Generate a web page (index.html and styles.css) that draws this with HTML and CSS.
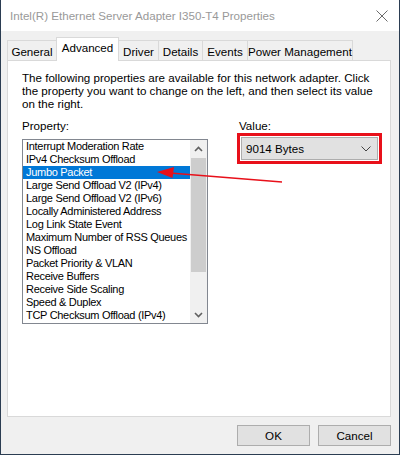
FILE: index.html
```html
<!DOCTYPE html>
<html lang="en">
<head>
    <meta charset="UTF-8">
    <title>Intel(R) Ethernet Server Adapter I350-T4 Properties</title>
    <link rel="stylesheet" href="styles.css">
</head>
<body>
    <div class="window">
        <div class="titlebar">
            <span class="title">Intel(R) Ethernet Server Adapter I350-T4 Properties</span>
            <svg class="close" width="12" height="12" viewBox="0 0 12 12">
                <path d="M0.5 0.5 L11.5 11.5 M11.5 0.5 L0.5 11.5" stroke="#6b6b6b" stroke-width="1" fill="none"/>
            </svg>
        </div>

        <div class="dialog">
            <div class="tabs">
                <div class="tab tab-general">General</div>
                <div class="tab tab-advanced active">Advanced</div>
                <div class="tab tab-driver">Driver</div>
                <div class="tab tab-details">Details</div>
                <div class="tab tab-events">Events</div>
                <div class="tab tab-power">Power Management</div>
            </div>

            <div class="panel">
                <p class="intro">The following properties are available for this network adapter. Click<br>
                the property you want to change on the left, and then select its value<br>
                on the right.</p>

                <div class="columns">
                    <div class="property-col">
                        <div class="label">Property:</div>
                        <div class="listbox">
                            <ul class="items">
                                <li>Interrupt Moderation Rate</li>
                                <li>IPv4 Checksum Offload</li>
                                <li class="selected">Jumbo Packet</li>
                                <li>Large Send Offload V2 (IPv4)</li>
                                <li>Large Send Offload V2 (IPv6)</li>
                                <li>Locally Administered Address</li>
                                <li>Log Link State Event</li>
                                <li>Maximum Number of RSS Queues</li>
                                <li>NS Offload</li>
                                <li>Packet Priority &amp; VLAN</li>
                                <li>Receive Buffers</li>
                                <li>Receive Side Scaling</li>
                                <li>Speed &amp; Duplex</li>
                                <li>TCP Checksum Offload (IPv4)</li>
                            </ul>
                            <div class="scrollbar">
                                <div class="scroll-btn">
                                    <svg width="9" height="6" viewBox="0 0 9 6"><path d="M1 5 L4.5 1.5 L8 5" stroke="#606060" stroke-width="1.6" fill="none"/></svg>
                                </div>
                                <div class="scroll-track">
                                    <div class="scroll-thumb"></div>
                                </div>
                                <div class="scroll-btn">
                                    <svg width="9" height="6" viewBox="0 0 9 6"><path d="M1 1 L4.5 4.5 L8 1" stroke="#606060" stroke-width="1.6" fill="none"/></svg>
                                </div>
                            </div>
                        </div>
                    </div>

                    <div class="value-col">
                        <div class="label">Value:</div>
                        <div class="combo">
                            <span>9014 Bytes</span>
                            <svg width="10" height="6" viewBox="0 0 10 6"><path d="M0.5 0.5 L5 5 L9.5 0.5" stroke="#444" stroke-width="1" fill="none"/></svg>
                        </div>
                    </div>
                </div>
            </div>

            <div class="buttons">
                <button class="btn">OK</button>
                <button class="btn">Cancel</button>
            </div>
        </div>

        <!-- red pointer drawn over the list -->
        <svg class="pointer" width="400" height="455" viewBox="0 0 400 455">
            <line x1="170" y1="173" x2="282" y2="182" stroke="#e8101a" stroke-width="1.6"/>
            <path d="M157 172 L174 167 L172.5 178 Z" fill="#e8101a"/>
        </svg>
    </div>
</body>
</html>
```

FILE: styles.css
```css
body {
    margin: 0;
    background: #ffffff;
    font-family: "Liberation Sans", Arial, sans-serif;
    font-size: 11.6px;
    color: #000;
}

.window {
    position: relative;
    width: 400px;
    height: 455px;
    box-sizing: border-box;
    border-left: 1px solid #2b3d52;
    border-right: 1px solid #2b3d52;
    border-bottom: 1px solid #2b3d52;
    display: flex;
    flex-direction: column;
    overflow: hidden;
}

/* Title bar */
.titlebar {
    height: 31px;
    flex: none;
    background: #fff;
    display: flex;
    align-items: center;
    justify-content: space-between;
    padding: 0 10px 0 9px;
}

.title {
    color: #999999;
    font-size: 11.6px;
    padding-bottom: 1px;
    white-space: nowrap;
}

.close {
    display: block;
    margin-right: 1px;
}

/* Dialog body */
.dialog {
    flex: 1;
    background: #f0f0f0;
    padding: 7px 8px 0 6px;
    display: flex;
    flex-direction: column;
}

.tabs {
    display: flex;
    align-items: flex-end;
    height: 22px;
    position: relative;
    z-index: 1;
}

.tab {
    box-sizing: border-box;
    height: 20px;
    border: 1px solid #d9d9d9;
    border-bottom: none;
    border-left: none;
    background: #f0f0f0;
    text-align: center;
    line-height: 19px;
    padding-top: 1px;
    white-space: nowrap;
}

.tab-general {
    width: 50px;
    border-left: 1px solid #d9d9d9;
}

.tab-advanced { width: 63px; }
.tab-driver { width: 40px; }
.tab-details { width: 44px; }
.tab-events { width: 45px; }
.tab-power { width: 105px; }

.tab.active {
    height: 24px;
    margin-bottom: -1px;
    margin-left: -1px;
    background: #fff;
    border-left: 1px solid #d9d9d9;
    padding-top: 0;
    line-height: 20px;
}

.panel {
    height: 357px;
    box-sizing: border-box;
    background: #fff;
    border: 1px solid #d9d9d9;
    padding: 10px 14px 0 14px;
}

.intro {
    margin: 0;
    line-height: 13px;
    white-space: nowrap;
}

.columns {
    display: flex;
    gap: 30px;
    margin-top: 9px;
}

.label {
    line-height: 13px;
}

/* Property list */
.listbox {
    margin-top: 7px;
    width: 186px;
    height: 185px;
    box-sizing: border-box;
    border: 1px solid #828790;
    display: flex;
}

.items {
    list-style: none;
    margin: 0;
    padding: 0;
    flex: 1;
    font-size: 11px;
    letter-spacing: -0.3px;
}

.items li {
    height: 13px;
    line-height: 13px;
    padding-left: 3px;
    white-space: nowrap;
}

.items li.selected {
    background: #0078d7;
    color: #fff;
}

.scrollbar {
    width: 17px;
    background: #f0f0f0;
    display: flex;
    flex-direction: column;
}

.scroll-btn {
    height: 17px;
    display: flex;
    align-items: center;
    justify-content: center;
}

.scroll-track {
    flex: 1;
    padding: 1px 1px;
}

.scroll-thumb {
    height: 114px;
    background: #cdcdcd;
}

/* Value combo */
.value-col {
    padding-left: 1px;
}

.combo {
    margin-top: 5px;
    margin-left: 2px;
    width: 137px;
    height: 23px;
    box-sizing: border-box;
    background: #e1e1e1;
    border: 1px solid #adadad;
    outline: 3px solid #e8101a;
    outline-offset: 1px;
    display: flex;
    align-items: center;
    justify-content: space-between;
    padding: 0 6px 0 4px;
}

/* Bottom buttons */
.buttons {
    display: flex;
    justify-content: flex-end;
    gap: 8px;
    margin-top: 8px;
}

.btn {
    width: 73px;
    height: 21px;
    background: #e1e1e1;
    border: 1px solid #adadad;
    font-family: "Liberation Sans", Arial, sans-serif;
    font-size: 11.6px;
    color: #000;
    padding: 0;
}

.pointer {
    position: absolute;
    top: 0;
    left: -1px;
    pointer-events: none;
}
```
